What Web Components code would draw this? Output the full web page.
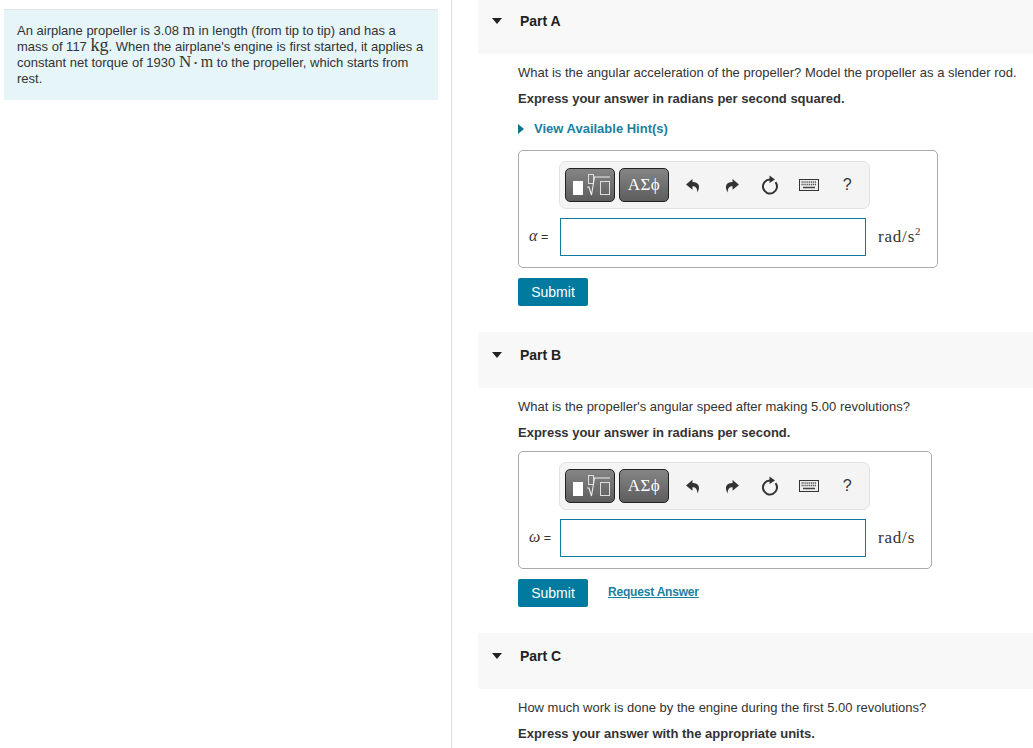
<!DOCTYPE html>
<html>
<head>
<meta charset="utf-8">
<title>Part A</title>
<style>
	html, body { margin: 0; height: 748px; overflow: hidden; background: #fff; }
	body { font-family: "Liberation Sans", Arial, sans-serif; font-size: 13px; color: #333; }
	.m { font-family: "Liberation Serif", serif; font-size: 16px; line-height: 0; }
	.b { font-size: 18px; }
	.n { font-size: 17px; }
	.dot { font-weight: bold; margin: 0 -1px; }
</style>
</head>
<body>
<quiz-page>
	<problem-box slot="left">An airplane propeller is 3.08 <span class="m">m</span> in length (from tip to tip) and has a mass of 117 <span class="m b">kg</span>. When the airplane's engine is first started, it applies a constant net torque of 1930 <span class="m n">N</span> <span class="dot">·</span> <span class="m">m</span> to the propeller, which starts from rest.</problem-box>

	<quiz-part label="Part A">
		<p-line>What is the angular acceleration of the propeller? Model the propeller as a slender rod.</p-line>
		<p-line strong>Express your answer in radians per second squared.</p-line>
		<hint-link>View Available Hint(s)</hint-link>
		<answer-box symbol="α" width="420">rad/s<sup>2</sup></answer-box>
		<action-row></action-row>
	</quiz-part>

	<quiz-part label="Part B">
		<p-line>What is the propeller's angular speed after making 5.00 revolutions?</p-line>
		<p-line strong>Express your answer in radians per second.</p-line>
		<answer-box symbol="ω" width="414">rad/s</answer-box>
		<action-row request></action-row>
	</quiz-part>

	<quiz-part label="Part C">
		<p-line>How much work is done by the engine during the first 5.00 revolutions?</p-line>
		<p-line strong>Express your answer with the appropriate units.</p-line>
	</quiz-part>
</quiz-page>

<script>
class QuizPage extends HTMLElement {
	constructor() {
		super();
		this.attachShadow({mode: 'open'}).innerHTML = `
			<style>
				:host { display: flex; height: 748px; overflow: hidden; }
				#left { box-sizing: border-box; width: 452px; height: 748px; flex: none; border-right: 1px solid #ddd; padding: 9px 13px 0 4px; }
				#right { flex: 1; min-width: 0; padding-left: 26px; margin-top: -2px; }
			</style>
			<div id="left"><slot name="left"></slot></div>
			<div id="right"><slot></slot></div>
		`;
	}
}

class ProblemBox extends HTMLElement {
	constructor() {
		super();
		this.attachShadow({mode: 'open'}).innerHTML = `
			<style>
				:host { display: block; box-sizing: border-box; height: 91px; background: #e6f5f7; border-top: 1px solid #e2e5e5; padding: 13px 13px 0; line-height: 16px; }
			</style>
			<slot></slot>
		`;
	}
}

class QuizPart extends HTMLElement {
	constructor() {
		super();
		this.attachShadow({mode: 'open'}).innerHTML = `
			<style>
				:host { display: block; margin-bottom: 26px; }
				#head { box-sizing: border-box; height: 56px; background: #f8f8f8; display: flex; align-items: flex-start; padding: 15px 0 0 14px; font-weight: bold; font-size: 14px; color: #222; line-height: 16px; }
				svg { width: 10px; height: 6px; margin: 5px 18px 0 0; flex: none; }
				#body { padding: 6px 0 0 40px; }
			</style>
			<div id="head">
				<svg viewBox="0 0 10 6"><path d="M0 0H10L5 6Z" fill="#222"/></svg>
				<span id="label"></span>
			</div>
			<div id="body"><slot></slot></div>
		`;
		this.shadowRoot.getElementById('label').textContent = this.getAttribute('label');
	}
}

class PLine extends HTMLElement {
	constructor() {
		super();
		const strong = this.hasAttribute('strong');
		this.attachShadow({mode: 'open'}).innerHTML = `
			<style>
				:host { display: block; line-height: 16px; padding: 5px 0; white-space: nowrap; font-weight: ${strong ? 'bold' : 'normal'}; }
			</style>
			<slot></slot>
		`;
	}
}

class HintLink extends HTMLElement {
	constructor() {
		super();
		this.attachShadow({mode: 'open'}).innerHTML = `
			<style>
				:host { display: flex; align-items: center; line-height: 16px; padding: 9px 0 8px; font-weight: bold; color: #1a7f9f; }
				svg { width: 6px; height: 10px; margin-right: 10px; }
			</style>
			<svg viewBox="0 0 6 10"><path d="M0 0L6 5L0 10Z" fill="#0f7392"/></svg>
			<slot></slot>
		`;
	}
}

class MathToolbar extends HTMLElement {
	constructor() {
		super();
		this.attachShadow({mode: 'open'}).innerHTML = `
			<style>
				:host { display: flex; align-items: center; box-sizing: border-box; width: 311px; height: 48px; margin-left: 40px; padding-left: 5px; background: #f4f4f4; border: 1px solid #e2e2e2; border-radius: 7px; }
				.btn { box-sizing: border-box; width: 50px; height: 34px; margin-right: 4px; flex: none; border: 1px solid #222; border-radius: 5px; background: linear-gradient(#858585, #5d5d5d); display: flex; align-items: center; justify-content: center; color: #fff; }
				.greek { font-family: "Liberation Serif", serif; font-size: 17px; letter-spacing: .5px; }
				.tools { display: flex; align-items: center; margin-left: 1px; flex: none; }
				.tool { width: 38.5px; height: 24px; display: flex; align-items: center; justify-content: center; color: #333; flex: none; }
				.q { font-size: 16px; }
			</style>
			<div class="btn">
				<svg width="46" height="28" viewBox="0 0 46 28">
					<rect x="6" y="10" width="10" height="14" fill="#fff"/>
					<rect x="21.500" y="3.500" width="5" height="9" fill="none" stroke="#ddd"/>
					<path d="M20 16l2 0 2.500 8 3-18h15.500" fill="none" stroke="#eee" stroke-width="1.100"/>
					<rect x="33.500" y="10.500" width="9" height="13" fill="none" stroke="#ddd"/>
				</svg>
			</div>
			<div class="btn greek">ΑΣϕ</div>
			<div class="tools">
				<div class="tool"><svg width="16" height="15" viewBox="0 0 14 14"><path d="M6.500 1L0.500 6 6.500 11V7.800C9.500 7.800 11 9.500 11 13.500 13.800 9 13.500 3.800 6.500 3.800Z" fill="#333"/></svg></div>
				<div class="tool"><svg width="16" height="15" viewBox="0 0 14 14"><path d="M7.500 1L13.500 6 7.500 11V7.800C4.500 7.800 3 9.500 3 13.500 .2 9 .5 3.800 7.500 3.800Z" fill="#333"/></svg></div>
				<div class="tool"><svg width="18" height="20" viewBox="0 0 18 20"><path d="M9 4.500A7 7 0 1 0 14.500 7.200" fill="none" stroke="#333" stroke-width="2"/><path d="M8.500 0.500L14 4.500 8.500 8Z" fill="#333"/></svg></div>
				<div class="tool"><svg width="20" height="12" viewBox="0 0 20 12"><rect x="0.500" y="0.500" width="19" height="11" fill="#eee" stroke="#333"/><path d="M2.500 3h15M2.500 5.500h15" stroke="#555" stroke-width="1.300" stroke-dasharray="1.200 .7"/><path d="M4 8.500h12" stroke="#444" stroke-width="1.500"/></svg></div>
				<div class="tool q">?</div>
			</div>
		`;
	}
}

class AnswerBox extends HTMLElement {
	constructor() {
		super();
		this.attachShadow({mode: 'open'}).innerHTML = `
			<style>
				:host { display: block; box-sizing: border-box; width: ${this.getAttribute('width')}px; height: 118px; margin-top: 5px; padding-top: 10px; border: 1px solid #aaa; border-radius: 5px; }
				#row { display: flex; align-items: center; margin-top: 9px; height: 38px; }
				#sym { width: 41px; box-sizing: border-box; padding: 0 0 3px 10px; font-size: 12.500px; white-space: nowrap; flex: none; }
				#sym i { font-family: "Liberation Serif", serif; font-size: 16px; }
				#field { box-sizing: border-box; width: 306px; height: 38px; border: 1px solid #0f7b9c; background: #fff; flex: none; }
				#unit { margin-left: 12px; font-family: "Liberation Serif", serif; font-size: 17px; letter-spacing: .8px; white-space: nowrap; }
				::slotted(sup) { font-size: 11px; line-height: 0; }
			</style>
			<math-toolbar></math-toolbar>
			<div id="row">
				<div id="sym"><i>${this.getAttribute('symbol')}</i> =</div>
				<div id="field"></div>
				<div id="unit"><slot></slot></div>
			</div>
		`;
	}
}

class ActionRow extends HTMLElement {
	constructor() {
		super();
		const request = this.hasAttribute('request');
		this.attachShadow({mode: 'open'}).innerHTML = `
			<style>
				:host { display: flex; align-items: center; margin-top: 10px; height: 28px; }
				#submit { box-sizing: border-box; width: 70px; height: 28px; background: #007a9f; color: #fff; border-radius: 2px; display: flex; align-items: center; justify-content: center; font-size: 14px; }
				a { margin-left: 20px; margin-top: -2px; color: #1a7f9f; font-weight: bold; font-size: 12px; letter-spacing: -.2px; text-decoration: underline; }
			</style>
			<div id="submit">Submit</div>
			${request ? '<a>Request Answer</a>' : ''}
		`;
	}
}

customElements.define('quiz-page', QuizPage);
customElements.define('problem-box', ProblemBox);
customElements.define('quiz-part', QuizPart);
customElements.define('p-line', PLine);
customElements.define('hint-link', HintLink);
customElements.define('math-toolbar', MathToolbar);
customElements.define('answer-box', AnswerBox);
customElements.define('action-row', ActionRow);
</script>
</body>
</html>
